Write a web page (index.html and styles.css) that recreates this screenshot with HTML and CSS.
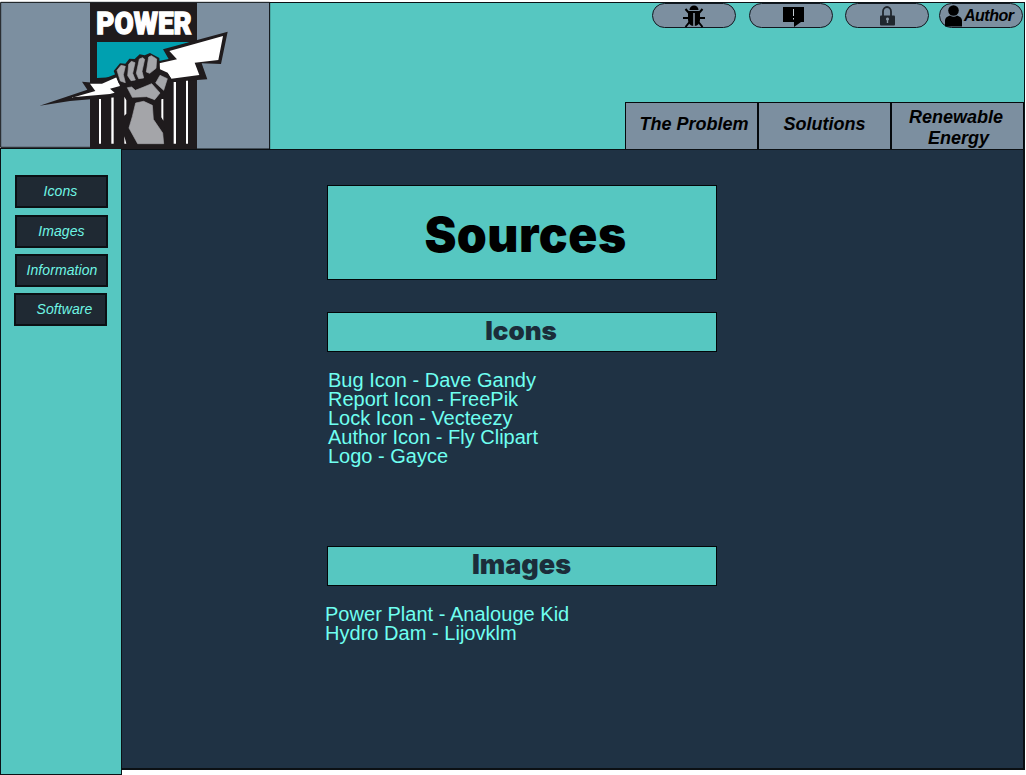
FILE: index.html
```html
<!DOCTYPE html>
<html lang="en">
<head>
<meta charset="utf-8">
<title>Sources</title>
<link rel="stylesheet" href="styles.css">
</head>
<body>
<div class="page">
  <header class="header">
    <a class="logo">
      <svg width="271" height="150" viewBox="0 0 813 450">
        <path fill="#7c8fa0" stroke="#0b0f12" stroke-width="3" d="M2 7H809V447H363V442H2Z"/>
        <path fill="#1f1b1d" d="M270 8H591V447H270Z"/>
        <path fill="#00a0b0" d="M291 126H574L493 150L508 178L400 228L291 234Z"/>
        <text class="logo-word" x="289" y="103" textLength="286" lengthAdjust="spacingAndGlyphs">POWER</text>
        <path fill="#fff" d="M297 297H303V431H297ZM334 292H341V431H334ZM373 290L379 301V341L373 347ZM373 409L379 431H373ZM484 297H490V362L484 352ZM521 246H528V431H521ZM558 240H564V431H558Z"/>
        <path fill="#1f1b1d" d="M119 317L262 269L246 245L282 248L348 222L480 182L506 177L489 148L683 95L663 192L605 190L622 238L500 247L360 290L210 303Z"/>
        <path fill="#fff" d="M216 293L286 273L270 251L306 251L350 232L360 258L330 266L344 278L330 282L216 292ZM478 190L531 178L508 153L669 108L655 180L584 188L598 225L514 236L502 219L475 216Z"/>
        <path fill="#1f1b1d" d="M341 213L360 190L376 191L388 176L404 177L419 163L434 166L450 159L478 174L480 208L503 218L516 240L497 276L481 303L465 314L467 350L494 382V435H405L379 384L397 315L383 296L381 261L356 250Z"/>
        <path fill="#a4a5a9" stroke="#a4a5a9" stroke-linejoin="round" stroke-width="2" d="M351 211L363 196L376 199L370 224L376 248L361 243ZM386 193L394 184L405 188L398 220L406 240L393 242L383 227ZM418 177L428 173L434 178L426 214L431 234L416 236L409 220ZM446 171L454 167L470 177L468 205L449 220L439 216ZM480 226L502 236L491 271L467 249ZM382 263L395 261L406 271L429 262L455 251L480 279L464 299L440 290L397 292ZM407 309L431 304L457 316L460 358L488 399L491 431H413L387 384L397 350Z"/>
        <path fill="none" stroke="#1f1b1d" stroke-width="7" d="M376 253L398 249L416 248L434 242L443 227"/>
      </svg>
    </a>
    <div class="bar">
      <div class="tools">
        <a class="pill"><svg width="24" height="24" viewBox="0 0 24 24"><path d="M7.500 6A4.500 4.500 0 0 1 16.500 6ZM6 7.500H11.400V22Q6.500 21.500 6 16ZM12.600 7.500H18V16Q17.500 21.500 12.600 22Z"/><path fill="none" stroke="#000" stroke-width="2" d="M7 9L3.500 5M17 9L20.500 5M7 14H1M17 14H23M7.500 18L3.500 23M16.500 18L20.500 23M6 8H18"/><path stroke="#8793a0" stroke-width="1" d="M12 9V22"/></svg></a>
        <a class="pill pill-report"><svg width="24" height="24" viewBox="0 0 24 24"><path d="M2 3H23V18H20L13 23V18H2Z"/><path stroke="#c4ccd2" stroke-width="1" d="M12.500 5V12M12.500 14V15.500"/></svg></a>
        <a class="pill"><svg width="24" height="24" viewBox="0 0 24 24"><path fill="none" stroke="#20272e" stroke-width="1.800" d="M8 12V7.500A4 4.500 0 0 1 16 7.500V12"/><rect x="5" y="11.500" width="15" height="10" rx="1" fill="#20272e"/><path fill="#8b9aa7" d="M12.500 13.500A1.600 1.600 0 0 1 13.200 16.500V19H11.800V16.500A1.600 1.600 0 0 1 12.500 13.500Z"/></svg></a>
        <a class="pill author"><svg width="19" height="24" viewBox="0 0 19 24"><circle cx="9.500" cy="6.500" r="5.300"/><path d="M1 22.500V16.500Q1 13 6 11.500Q10 14 13 11.500Q18 13 18 16.500V22.500Z"/></svg><span>Author</span></a>
      </div>
      <nav class="tabs"><a class="tab"><span class="problem">The Problem</span></a><a class="tab"><span>Solutions</span></a><a class="tab energy"><span>Renewable<br><span class="second">Energy</span></span></a></nav>
    </div>
  </header>
  <div class="body">
    <aside class="side">
      <a class="link">Icons</a>
      <a class="link images">Images</a>
      <a class="link info">Information</a>
      <a class="link software">Software</a>
    </aside>
    <main class="main">
      <h1 class="title"><span>Sources</span></h1>
      <h2 class="section"><span>Icons</span></h2>
      <ul class="list">
        <li>Bug Icon - Dave Gandy</li><li>Report Icon - FreePik</li><li>Lock Icon - Vecteezy</li><li>Author Icon - Fly Clipart</li><li>Logo - Gayce</li>
      </ul>
      <h2 class="section section-images"><span>Images</span></h2>
      <ul class="list list-images">
        <li>Power Plant - Analouge Kid</li><li>Hydro Dam - Lijovklm</li>
      </ul>
    </main>
  </div>
</div>
</body>
</html>
```
FILE: styles.css
```css
* { box-sizing: border-box; }
body { margin: 0; background: #fff; font-family: "Liberation Sans", Arial, sans-serif; }
.page { width: 1026px; height: 775px; overflow: hidden; display: flex; flex-direction: column; }
.header { display: flex; height: 148px; flex: none; }
.logo { width: 269px; flex: none; position: relative; z-index: 1; }
.logo svg { display: block; }
.logo-word { font: 900 96px Roboto, sans-serif; fill: #fff; stroke: #fff; stroke-width: 4px; }
.bar { width: 756px; height: 148px; margin-top: 2px; background: #56c7c1; border: 1px solid #0b1216; display: flex; flex-direction: column; justify-content: space-between; align-items: flex-end; }
.tools { display: flex; padding: 0 1px 0 0; }
.pill { width: 84px; height: 25px; margin-right: 13px; border: 1.500px solid #101820; border-radius: 13px; background: #7c8fa0; display: flex; align-items: center; justify-content: center; }
.pill svg { flex: none; }
.pill-report { margin-right: 12px; }
.pill:nth-child(3) { margin-right: 10px; }
.pill-report svg { margin-left: 4px; }
.author { margin-right: 0; font: italic bold 16px "Liberation Sans", Arial, sans-serif; justify-content: flex-start; padding-left: 4px; gap: 1px; letter-spacing: -0.5px; }
.tabs { display: flex; }
.tab { width: 133px; height: 47px; background: #7c8fa0; border: 1px solid #05090c; border-bottom: 0; display: flex; align-items: center; justify-content: center; text-align: center; font-size: 18px; line-height: 21px; font-style: italic; font-weight: bold; padding-bottom: 4px; }
.problem { padding-left: 5px; }
.energy { padding: 3px 3px 0 0; }
.second { padding-left: 5px; }
.body { display: flex; flex: 1; min-height: 0; }
.side { width: 122px; height: 627px; background: #56c7c1; border: 1px solid #0b1216; padding: 26px 13px 0 14px; display: flex; flex-direction: column; flex: none; }
.link { height: 33px; width: 93px; flex: none; border: 2px solid #0b1014; background: #1f2933; color: #6ff5e3; font-size: 14px; font-style: italic; letter-spacing: 0.080px; display: flex; align-items: center; justify-content: center; padding-bottom: 1px; margin-bottom: 7px; padding-right: 2px; }
.images { margin-bottom: 6px; padding-right: 0; }
.info { padding: 0 0 1px 1px; margin-bottom: 6px; }
.software { margin-left: -1px; padding: 0 0 1px 8px; }
.main { width: 903px; height: 621px; margin-top: 1px; background: #1f3244; border: 1px solid #0b1014; border-bottom-width: 2px; border-right-width: 2px; border-left: 0; padding: 35px 0 0 205px; }
h1, h2, ul { margin: 0; padding: 0; }
.title, .section { width: 390px; background: #56c7c1; border: 1px solid #020608; display: flex; justify-content: center; align-items: center; font-family: Inter, sans-serif; font-weight: 900; }
.title { height: 95px; font-size: 48px; letter-spacing: 0.500px; padding: 3px 0 0 7px; margin-bottom: 32px; }
.section { height: 40px; font-size: 26px; color: #1b2d3a; padding: 0 2px 3px 0; }
.section-images { font-size: 27px; padding-right: 1px; }
.list { list-style: none; height: 175px; margin: 19px 0 0 1px; font-size: 20px; line-height: 19px; color: #6ffff0; }
.list-images { margin: 19px 0 0 -2px; height: auto; letter-spacing: 0.030px; }
```
